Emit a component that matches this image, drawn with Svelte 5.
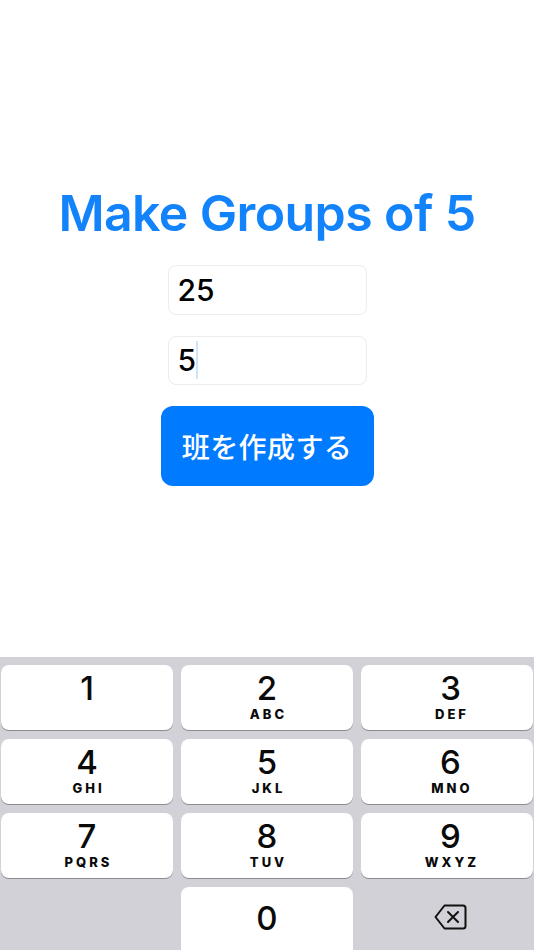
<script>
  let count = $state('25');
  let size = $state('5');

  const keys = [
    { n: '1', l: '' },
    { n: '2', l: 'ABC' },
    { n: '3', l: 'DEF' },
    { n: '4', l: 'GHI' },
    { n: '5', l: 'JKL' },
    { n: '6', l: 'MNO' },
    { n: '7', l: 'PQRS' },
    { n: '8', l: 'TUV' },
    { n: '9', l: 'WXYZ' },
  ];
</script>

<div class="page">
  <main>
    <h1>Make Groups of {size}</h1>
    <div class="field">{count}</div>
    <div class="field">{size}<span class="caret"></span></div>
    <button class="make">班を作成する</button>
  </main>

  <div class="keyboard">
    {#each keys as k}
      <div class="key">
        <span class="num">{k.n}</span>
        {#if k.l}<span class="letters">{k.l}</span>{/if}
      </div>
    {/each}
    <div class="blank"></div>
    <div class="key zero"><span class="num">0</span></div>
    <div class="blank del">
      <svg width="33" height="26" viewBox="0 0 33 26" fill="none" stroke="#111" stroke-width="2" stroke-linejoin="round" stroke-linecap="round">
        <path d="M10.5 1.5H29a2.5 2.5 0 0 1 2.500 2.500v18a2.500 2.500 0 0 1-2.500 2.500H10.500L1.500 13z" />
        <path d="M14 8l10 10M24 8L14 18" />
      </svg>
    </div>
  </div>
</div>

<style>
  :global(body) {
    margin: 0;
    background: #fff;
  }

  .page {
    width: 534px;
    height: 950px;
    display: flex;
    flex-direction: column;
    overflow: hidden;
    font-family: Inter, "Liberation Sans", "Noto Sans CJK JP", sans-serif;
  }

  main {
    height: 657px;
    flex-shrink: 0;
    display: flex;
    flex-direction: column;
    align-items: center;
    box-sizing: border-box;
    padding-top: 181px;
  }

  h1 {
    margin: 0 0 20px;
    height: 64px;
    line-height: 64px;
    font-size: 50px;
    font-weight: 600;
    letter-spacing: -0.6px;
    color: #1283fb;
    white-space: nowrap;
  }

  .field {
    width: 199px;
    height: 49.500px;
    box-sizing: border-box;
    border: 1px solid #ececec;
    border-radius: 8px;
    margin-bottom: 21px;
    padding-left: 9px;
    display: flex;
    align-items: center;
    font-size: 30px;
    font-weight: 500;
    color: #000;
  }

  .caret {
    width: 2px;
    height: 38px;
    background: #cfe3f8;
  }

  .make {
    width: 213px;
    height: 80px;
    border: 0;
    border-radius: 12px;
    background: #007aff;
    color: #fff;
    font-family: "Noto Sans CJK JP", sans-serif;
    font-size: 28px;
    font-weight: 500;
    letter-spacing: 0.4px;
    padding: 0;
  }

  .keyboard {
    flex: 1;
    background: #d1d1d7;
    padding: 8px 1px 0;
    display: grid;
    grid-template-columns: repeat(3, 172px);
    grid-template-rows: repeat(3, 64.500px) 63px;
    column-gap: 8px;
    row-gap: 9.500px;
  }

  .key {
    background: #fff;
    border-radius: 8px;
    box-shadow: 0 1px 0 #8b8b90;
    display: flex;
    flex-direction: column;
    align-items: center;
    color: #0a0a0a;
    padding-top: 6px;
    box-sizing: border-box;
  }

  .key:nth-child(3n) {
    padding-left: 7px;
  }

  .key.zero {
    border-radius: 8px 8px 0 0;
    box-shadow: none;
    padding-top: 14px;
  }

  .num {
    font-size: 33px;
    line-height: 34px;
    font-weight: 500;
  }

  .letters {
    margin-top: 2px;
    font-size: 13px;
    line-height: 14px;
    font-weight: 800;
    letter-spacing: 3px;
    margin-right: -3px;
  }

  .del {
    display: flex;
    align-items: center;
    justify-content: center;
    padding-bottom: 4px;
    padding-left: 6px;
    box-sizing: border-box;
  }
</style>
